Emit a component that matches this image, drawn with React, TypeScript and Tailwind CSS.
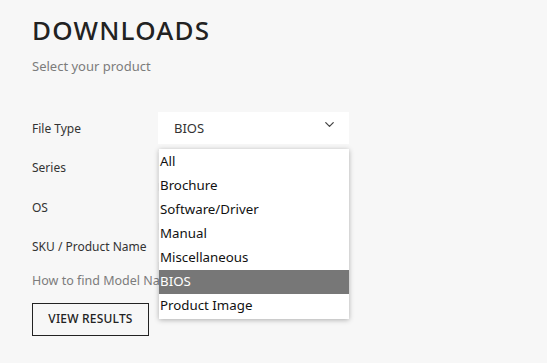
import { ChevronDown } from 'lucide-react';

const OPTIONS = ['All', 'Brochure', 'Software/Driver', 'Manual', 'Miscellaneous', 'BIOS', 'Product Image'];

const FIELDS = [
  { label: 'File Type', value: 'BIOS' },
  { label: 'Series', value: '' },
  { label: 'OS', value: '' },
  { label: 'SKU / Product Name', value: '' },
];

export default function App() {
  const selected = 'BIOS';

  return (
    <div className="min-h-[363px] w-full bg-[#f7f7f7] px-8 pt-[17px] text-[#222] font-['Noto_Sans',sans-serif]">
      <h1 className="text-[26px] leading-[26px] font-medium tracking-[1.2px] text-[#222]">DOWNLOADS</h1>
      <p className="mt-[15px] text-[13px] leading-4 text-[#7c7c7c]">Select your product</p>

      <div className="relative mt-[38px] w-[317px]">
        <div className="flex flex-col gap-[7.4px]">
          {FIELDS.map(f => (
            <div key={f.label} className="flex items-center h-[32px]">
              <span className="w-[126px] pt-[2px] text-[12px] text-[#333]">{f.label}</span>
              <div className="flex-1 h-[32px] bg-white flex items-center justify-between pl-4 pr-3">
                <span className="pt-[2px] text-[13px] text-[#333]">{f.value}</span>
                <ChevronDown size={15} strokeWidth={2} className="text-[#444] -mt-2" />
              </div>
            </div>
          ))}
        </div>

        <p className="mt-[10px] w-[127px] text-[12.5px] text-[#7c7c7c] whitespace-nowrap overflow-hidden">How to find Model Name?</p>

        {/* open list of File Type */}
        <ul className="absolute left-[127px] top-[37px] w-[190px] bg-white shadow-[0_1px_5px_rgba(0,0,0,0.3)] py-[1px]">
          {OPTIONS.map(o => (
            <li key={o}
              className={`h-[24px] flex items-center pl-[1px] text-[13.3px] ${o === selected ? 'bg-[#777] text-white' : 'text-[#111]'}`}>
              {o}
            </li>
          ))}
        </ul>
      </div>

      <button className="mt-[12px] h-[33px] w-[117px] border border-[#222] text-[12px] font-medium tracking-[0.2px] text-[#222]">
        VIEW RESULTS
      </button>
    </div>
  );
}
